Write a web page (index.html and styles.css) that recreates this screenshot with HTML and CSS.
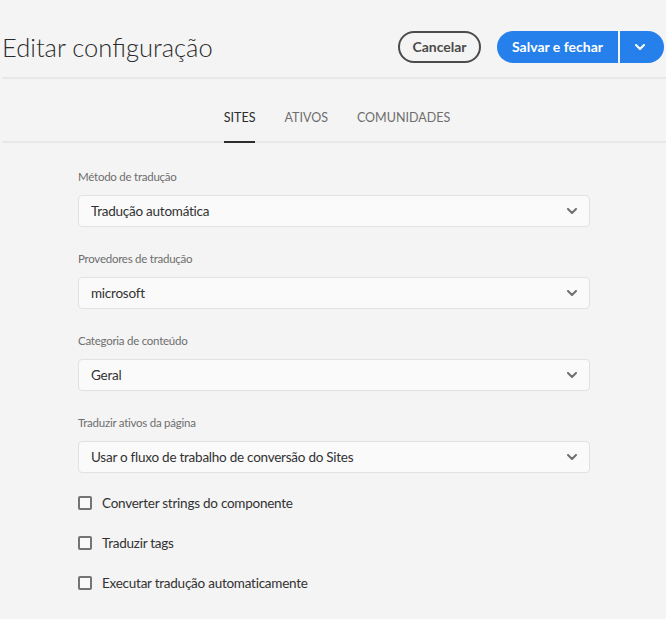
FILE: index.html
```html
<!DOCTYPE html>
<html lang="pt">
<head>
<meta charset="utf-8">
<title>Editar configuração</title>
<link rel="stylesheet" href="styles.css">
</head>
<body>
<div class="page">
  <header class="header">
    <h1 class="title">Editar configuração</h1>
    <div class="actions">
      <button class="btn btn-cancel">Cancelar</button>
      <div class="split">
        <button class="btn btn-primary">Salvar e fechar</button>
        <button class="btn btn-more" aria-label="Mais">
          <svg width="10" height="6" viewBox="0 0 10 6"><path d="M1 1l4 4 4-4" fill="none" stroke="#fff" stroke-width="2" stroke-linecap="round" stroke-linejoin="round"/></svg>
        </button>
      </div>
    </div>
  </header>
  <nav class="tabs">
    <span class="tab active">SITES</span>
    <span class="tab">ATIVOS</span>
    <span class="tab">COMUNIDADES</span>
  </nav>
  <main class="form">
    <div class="field">
      <label class="label">Método de tradução</label>
      <div class="select"><span>Tradução automática</span><svg class="chev" width="10" height="6" viewBox="0 0 10 6"><path d="M1 1l4 4 4-4" fill="none" stroke="#6e6e6e" stroke-width="2" stroke-linecap="round" stroke-linejoin="round"/></svg></div>
    </div>
    <div class="field">
      <label class="label">Provedores de tradução</label>
      <div class="select"><span>microsoft</span><svg class="chev" width="10" height="6" viewBox="0 0 10 6"><path d="M1 1l4 4 4-4" fill="none" stroke="#6e6e6e" stroke-width="2" stroke-linecap="round" stroke-linejoin="round"/></svg></div>
    </div>
    <div class="field">
      <label class="label">Categoria de conteúdo</label>
      <div class="select"><span>Geral</span><svg class="chev" width="10" height="6" viewBox="0 0 10 6"><path d="M1 1l4 4 4-4" fill="none" stroke="#6e6e6e" stroke-width="2" stroke-linecap="round" stroke-linejoin="round"/></svg></div>
    </div>
    <div class="field">
      <label class="label">Traduzir ativos da página</label>
      <div class="select"><span>Usar o fluxo de trabalho de conversão do Sites</span><svg class="chev" width="10" height="6" viewBox="0 0 10 6"><path d="M1 1l4 4 4-4" fill="none" stroke="#6e6e6e" stroke-width="2" stroke-linecap="round" stroke-linejoin="round"/></svg></div>
    </div>
    <div class="checks">
      <label class="check"><span class="box"></span>Converter strings do componente</label>
      <label class="check"><span class="box"></span>Traduzir tags</label>
      <label class="check"><span class="box"></span>Executar tradução automaticamente</label>
    </div>
  </main>
</div>
</body>
</html>
```
FILE: styles.css
```css
* { box-sizing: border-box; }
html, body { margin: 0; padding: 0; }
body {
  background: #f4f4f4;
  font-family: Lato, "Open Sans", sans-serif;
  color: #323232;
}
.page {
  padding-left: 2px;
  min-height: 619px;
}
.header {
  display: flex;
  align-items: center;
  justify-content: space-between;
  height: 79px;
  padding-top: 16px;
  border-bottom: 2px solid #e8e8e8;
  padding-right: 2px;
}
.title {
  margin: 0;
  font-family: Lato, "Open Sans", sans-serif;
  font-weight: 300;
  font-size: 25.5px;
  line-height: 32px;
  color: #2c2c2c;
}
.actions {
  display: flex;
  align-items: center;
  gap: 16px;
}
.btn {
  font-family: Lato, sans-serif;
  font-weight: 700;
  font-size: 14px;
  height: 32px;
  border: none;
  cursor: pointer;
  padding: 0;
}
.btn-cancel {
  width: 83px;
  background: transparent;
  border: 2px solid #4b4b4b;
  border-radius: 16px;
  color: #4b4b4b;
}
.split {
  display: flex;
  gap: 2px;
}
.btn-primary {
  width: 121px;
  background: #2680eb;
  color: #fff;
  border-radius: 16px 0 0 16px;
}
.btn-more {
  width: 44px;
  background: #2680eb;
  border-radius: 0 16px 16px 0;
  display: flex;
  align-items: center;
  justify-content: center;
  padding-right: 4px;
}
.tabs {
  display: flex;
  justify-content: center;
  gap: 29px;
  height: 64px;
  border-bottom: 2px solid #e8e8e8;
  padding-left: 6px;
}
.tab {
  font-size: 12.5px;
  color: #6e6e6e;
  line-height: 18px;
  padding-top: 30px;
  height: 64px;
  border-bottom: 2px solid transparent;
}
.tab.active {
  color: #2c2c2c;
  border-bottom-color: #2c2c2c;
}
.form {
  width: 512px;
  margin-left: 76px;
  padding-top: 25px;
}
.field {
  margin-bottom: 23px;
}
.label {
  display: block;
  font-size: 11.5px;
  letter-spacing: -0.25px;
  line-height: 18px;
  color: #6e6e6e;
  margin-bottom: 9px;
}
.select {
  display: flex;
  align-items: center;
  justify-content: space-between;
  height: 32px;
  background: #fafafa;
  border: 1px solid #e1e1e1;
  border-radius: 4px;
  padding: 0 12px 0 12px;
  font-size: 13.5px;
  letter-spacing: -0.25px;
  color: #323232;
}
.checks {
  margin-top: -13px;
}
.check {
  display: flex;
  align-items: center;
  height: 40px;
  font-size: 13.5px;
  letter-spacing: -0.25px;
  color: #323232;
}
.box {
  width: 14px;
  height: 14px;
  border: 2px solid #747474;
  border-radius: 2px;
  margin-right: 10px;
  background: #fafafa;
}
```
